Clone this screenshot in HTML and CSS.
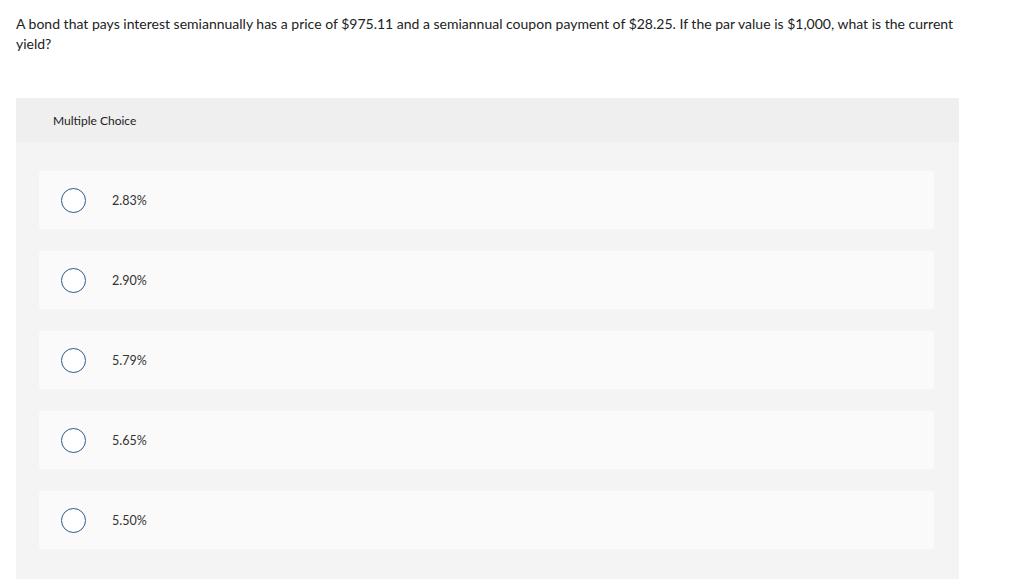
FILE: index.html
```html
<!DOCTYPE html>
<html>
<head>
<meta charset="utf-8">
<link rel="stylesheet" href="styles.css">
</head>
<body>
<div class="page">
  <p class="question">A bond that pays interest semiannually has a price of $975.11 and a semiannual coupon payment of $28.25. If the par value is $1,000, what is the current yield?</p>
  <section class="panel">
    <div class="panel-head">Multiple Choice</div>
    <div class="panel-body">
      <div class="option"><span class="radio"></span><span class="label">2.83%</span></div>
      <div class="option"><span class="radio"></span><span class="label">2.90%</span></div>
      <div class="option"><span class="radio"></span><span class="label">5.79%</span></div>
      <div class="option"><span class="radio"></span><span class="label">5.65%</span></div>
      <div class="option"><span class="radio"></span><span class="label">5.50%</span></div>
    </div>
  </section>
</div>
</body>
</html>
```
FILE: styles.css
```css
html, body {
  margin: 0;
  padding: 0;
  background: #ffffff;
}
body {
  font-family: "Lato", "Open Sans", "Liberation Sans", sans-serif;
  color: #222;
}
.page {
  padding: 14px 0 0 16px;
  width: 943px;
}
.question {
  margin: 0;
  font-size: 14px;
  line-height: 20px;
  color: #222;
  width: 950px;
}
.panel {
  margin-top: 44px;
  width: 943px;
  background: #f4f4f4;
}
.panel-head {
  height: 44px;
  background: #efefef;
  display: flex;
  align-items: center;
  padding-left: 37px;
  font-size: 12px;
  color: #222;
}
.panel-body {
  padding: 29px 25px 30px 23px;
  display: flex;
  flex-direction: column;
  gap: 22px;
}
.option {
  height: 58px;
  background: #fafafa;
  border-radius: 3px;
  display: flex;
  align-items: center;
  padding-left: 22px;
}
.radio {
  width: 23px;
  height: 23px;
  border: 1px solid #2d5a8e;
  border-radius: 50%;
  background: #fff;
  flex: none;
}
.label {
  margin-left: 26px;
  font-size: 12.5px;
  color: #333;
}
```
